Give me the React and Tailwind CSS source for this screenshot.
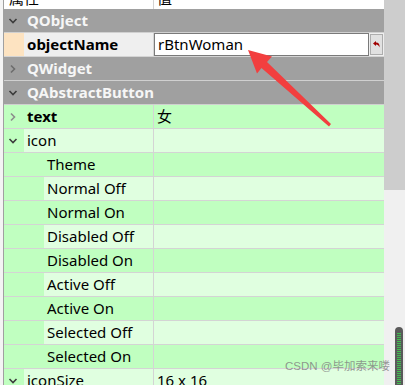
const FONT = { fontFamily: '"Noto Sans", "Noto Sans CJK SC", sans-serif' }

const rows = [
  { type: 'group', label: 'QObject', open: true },
  { type: 'name' },
  { type: 'group', label: 'QWidget', open: false },
  { type: 'group', label: 'QAbstractButton', open: true },
  { label: 'text', value: '女', level: 1, bold: true, tone: 'dark', chevron: 'right' },
  { label: 'icon', level: 1, tone: 'light', chevron: 'down' },
  { label: 'Theme', level: 2, tone: 'dark' },
  { label: 'Normal Off', level: 2, tone: 'light' },
  { label: 'Normal On', level: 2, tone: 'dark' },
  { label: 'Disabled Off', level: 2, tone: 'light' },
  { label: 'Disabled On', level: 2, tone: 'dark' },
  { label: 'Active Off', level: 2, tone: 'light' },
  { label: 'Active On', level: 2, tone: 'dark' },
  { label: 'Selected Off', level: 2, tone: 'light' },
  { label: 'Selected On', level: 2, tone: 'dark' },
  { label: 'iconSize', value: '16 x 16', level: 1, tone: 'light', chevron: 'down' },
]

function Chevron({ dir, color }) {
  return (
    <svg width="10" height="10" viewBox="0 0 10 10" className="shrink-0">
      {dir === 'down' ? (
        <polyline points="1.5,3 5,6.5 8.5,3" fill="none" stroke={color} strokeWidth="1.6" />
      ) : (
        <polyline points="3,1.5 6.5,5 3,8.5" fill="none" stroke={color} strokeWidth="1.6" />
      )}
    </svg>
  )
}

function GroupRow({ label, open }) {
  return (
    <div className="shrink-0 h-[24px] flex items-center bg-[#a0a0a0] border-b border-[#d0d0d0]">
      <div className="w-[23px] pl-[4px] flex items-center">
        <Chevron dir={open ? 'down' : 'right'} color={open ? '#3c3c3c' : '#6c6c6c'} />
      </div>
      <span className="text-[15px] font-bold text-[#f6f6f6] leading-none">{label}</span>
    </div>
  )
}

function NameRow() {
  return (
    <div className="shrink-0 h-[24px] flex bg-[#efefef] border-b border-[#d4d4d4]">
      <div className="w-[149px] flex">
        <div className="w-[20px] bg-[#fde3c1]" />
        <span className="pl-[3px] self-center text-[15px] font-bold text-black leading-none">objectName</span>
      </div>
      <div className="w-px bg-[#d4d4d4]" />
      <div className="w-[230px] flex items-center gap-[1px]">
        <div className="w-[215px] h-[23px] bg-white border border-[#7a7a7a] flex items-center pl-[3px]">
          <span className="text-[15px] text-black leading-none">rBtnWoman</span>
        </div>
        <div className="w-[13px] h-[21px] bg-[#e1e1e1] border border-[#adadad] flex items-center justify-center">
          <svg width="9" height="9" viewBox="0 0 9 9">
            <path d="M1 3.5 L4 1 L4 2.5 Q8 2.5 7.5 7.5 Q6.5 4.5 4 4.5 L4 6 Z" fill="#a00000" />
          </svg>
        </div>
      </div>
    </div>
  )
}

function PropRow({ label, value, level, bold, tone, chevron }) {
  const bg = tone === 'dark' ? 'bg-[#c0ffc0]' : 'bg-[#e0ffe0]'
  const branch = level === 2 ? 'w-[40px]' : 'w-[20px]'
  return (
    <div className={`shrink-0 h-[24px] flex border-b border-[#d4d4d4] ${bg}`}>
      <div className="w-[149px] flex">
        <div className={`${branch} bg-[#c0ffc0] flex items-center pl-[4px]`}>
          {chevron && <Chevron dir={chevron} color={chevron === 'down' ? '#3c3c3c' : '#8c8c8c'} />}
        </div>
        <span className={`pl-[3px] self-center text-[15px] leading-none text-black ${bold ? 'font-bold' : ''}`}>{label}</span>
      </div>
      <div className="w-px bg-[#d4d4d4]" />
      <div className="w-[230px] flex items-center pl-[3px]">
        {value && <span className="text-[15px] leading-none text-black">{value}</span>}
      </div>
    </div>
  )
}

export default function App() {
  return (
    <div className="relative w-[405px] h-[385px] overflow-hidden bg-white flex" style={FONT}>
      <div className="w-[3px] bg-[#f4f4f4]" />
      <div className="w-[381px] border-l border-[#a0a0a0] flex flex-col">
        <div className="shrink-0 h-[9px] overflow-hidden flex bg-white">
          <div className="w-[149px] pl-[5px]">
            <div className="-mt-[13px] text-[15px] text-black">属性</div>
          </div>
          <div className="w-px bg-[#d4d4d4]" />
          <div className="pl-[3px]">
            <div className="-mt-[13px] text-[15px] text-black">值</div>
          </div>
        </div>
        {rows.map((row, i) =>
          row.type === 'group' ? (
            <GroupRow key={i} label={row.label} open={row.open} />
          ) : row.type === 'name' ? (
            <NameRow key={i} />
          ) : (
            <PropRow key={i} {...row} />
          )
        )}
      </div>
      <div className="w-[21px] flex flex-col">
        <div className="h-[190px] bg-[#cdcdcd]" />
        <div className="flex-1 bg-[#f0f0f0]" />
      </div>

      <svg className="absolute left-0 top-0 pointer-events-none" width="405" height="385" viewBox="0 0 405 385">
        <polygon
          points="248,50 272,56.5 267,62 331,124 329,126.5 261.5,68 257,73.5"
          fill="#f23f3f"
        />
      </svg>

      <div className="absolute left-[395px] top-[327px] w-[8px] h-[58px] rounded-t-full bg-[#5a5a5a] overflow-hidden">
        <svg width="8" height="58" viewBox="0 0 8 58">
          {Array.from({ length: 26 }).map((_, i) => (
            <rect key={i} x="2" y={6 + i * 2} width="4" height="1" fill="#3fbf4f" />
          ))}
        </svg>
      </div>

      <div className="absolute left-[285px] top-[361px] text-[11.5px] leading-none text-[#7d7d7d]/80 whitespace-nowrap" style={{ fontFamily: '"Liberation Sans", "Noto Sans CJK SC", sans-serif' }}>
        CSDN @毕加索来喽
      </div>
    </div>
  )
}
